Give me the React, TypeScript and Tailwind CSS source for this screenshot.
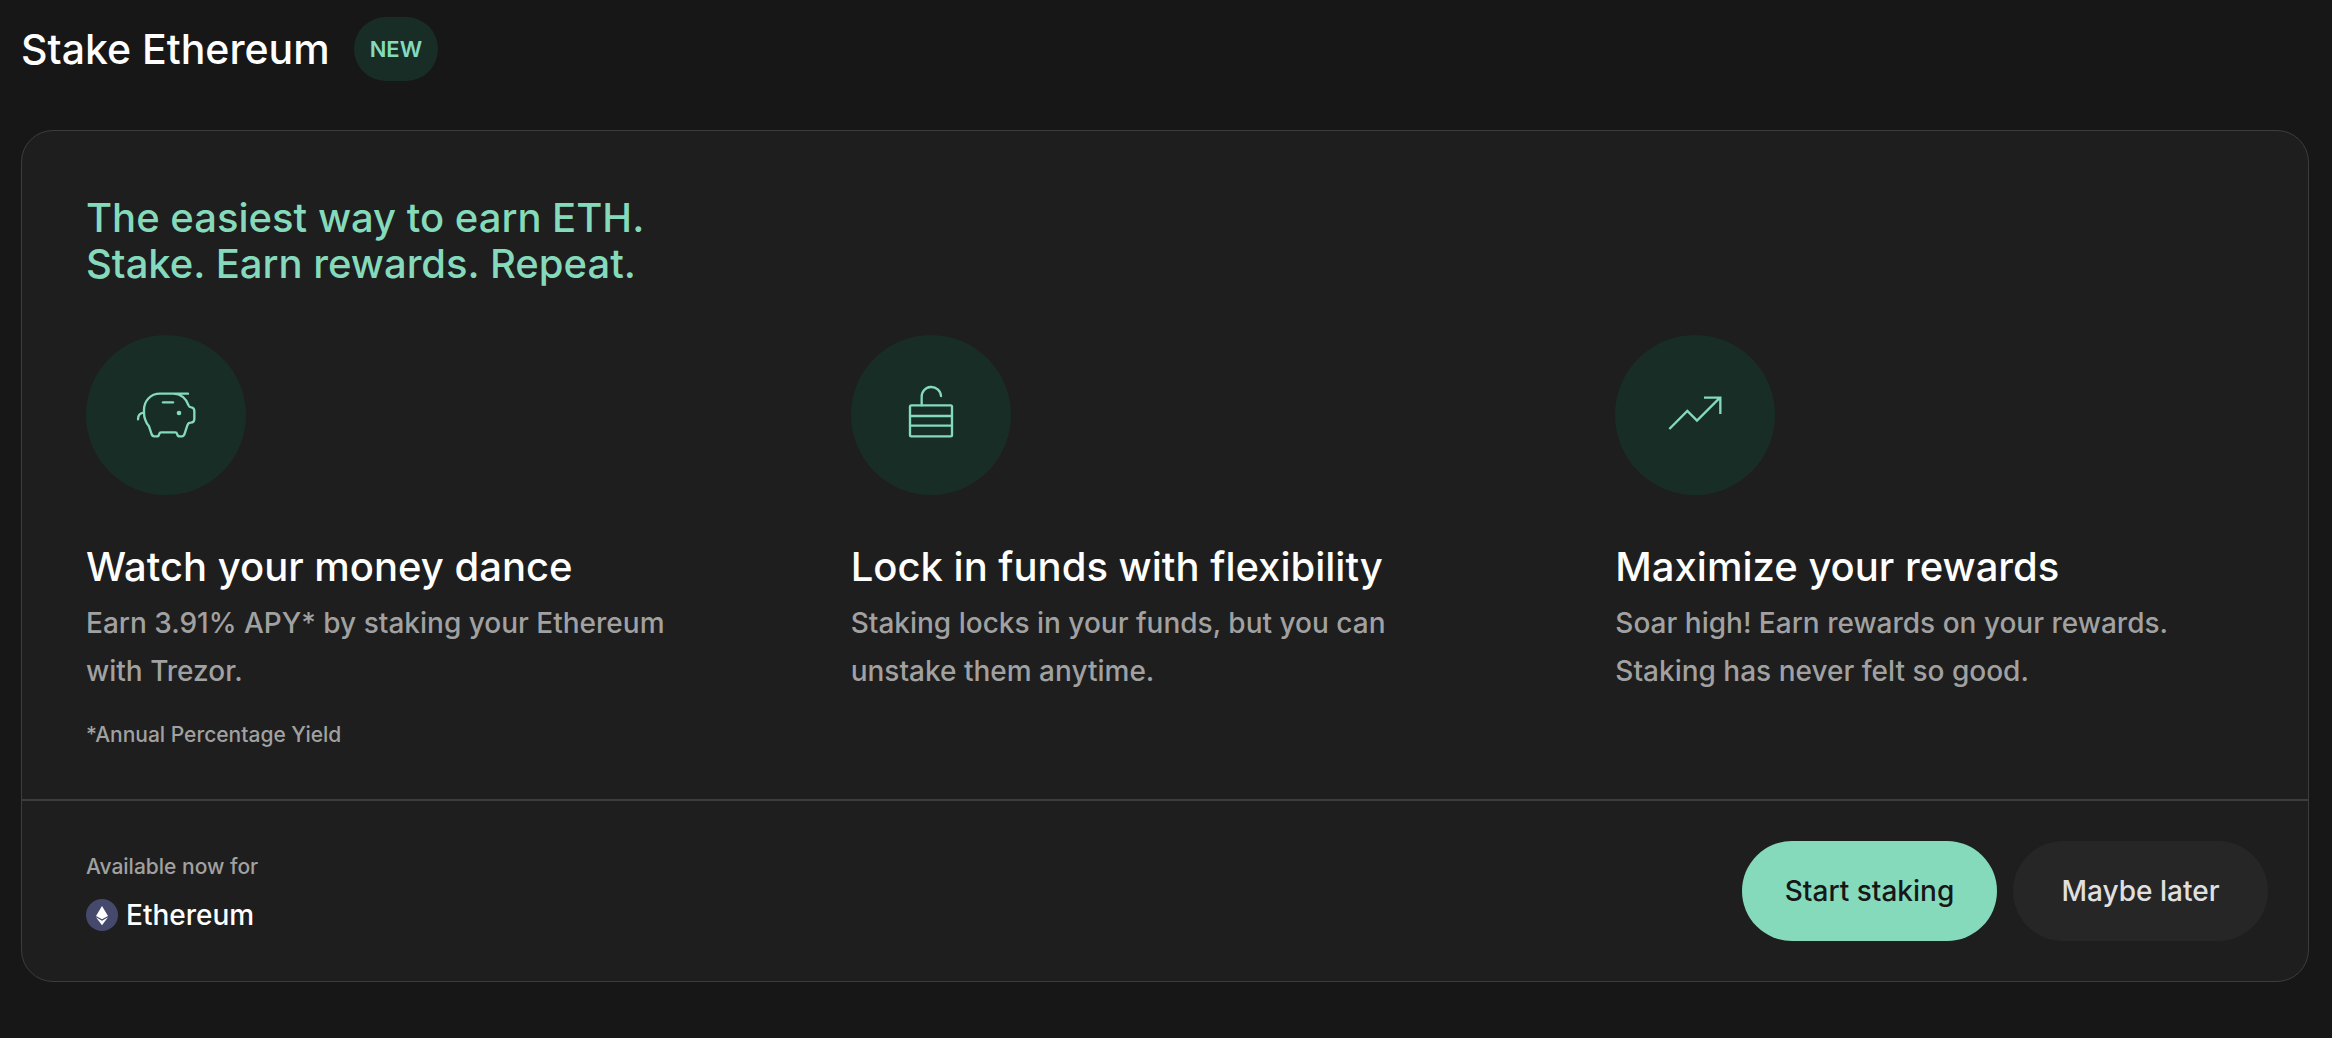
import type { ReactNode } from 'react';

function PiggyIcon() {
  return (
    <svg viewBox="18 15 480 480" className="size-full" fill="none" stroke="#84dabb" strokeWidth="7" strokeLinecap="round" strokeLinejoin="round" aria-hidden="true">
      <path d="M324 191H240C211 191 192 213 192 240V248C192 266 199 279 207 289L214 310C216 317 219 319 223 319H231C235 319 237 316 238 311Q239 307 243 307H286Q290 307 291 311C292 316 295 319 299 319H306C310 319 312 317 314 311L322 286Q325 278 332 278Q343 277 343 266V243Q343 233 334 232Q328 232 326 227C319 207 303 192 280 191" />
      <path d="M192 248Q174 249 174 268" />
      <path d="M249 217H279" />
      <circle cx="297" cy="249" r="7" fill="#84dabb" stroke="none" />
    </svg>
  );
}

function UnlockIcon() {
  return (
    <svg viewBox="18 15 480 480" className="size-full" fill="none" stroke="#84dabb" strokeWidth="7" strokeLinecap="round" strokeLinejoin="round" aria-hidden="true">
      <rect x="195" y="226" width="126" height="93" rx="4" />
      <path d="M195 258H321M195 287H321M230 226V202A29 29 0 0 1 288 198" />
    </svg>
  );
}

function GrowthIcon() {
  return (
    <svg viewBox="15 15 480 480" className="size-full" fill="none" stroke="#84dabb" strokeWidth="7" aria-hidden="true">
      <path d="M178 297L232 243L261 272L330 203M282 203H331V252" />
    </svg>
  );
}

function EthereumLogo() {
  return (
    <svg viewBox="0 0 96 96" className="size-8" aria-hidden="true">
      <circle cx="48" cy="48" r="48" fill="#454a6c" />
      <path d="M48 21L66 51L48 61L30 51Z" fill="#fff" />
      <path d="M30 55L48 65L66 55L48 79Z" fill="#fff" />
    </svg>
  );
}

function Feature({ icon, title, children }: { icon: ReactNode; title: string; children: ReactNode }) {
  return (
    <li>
      <div className="size-40 rounded-full bg-[#192d27]">{icon}</div>
      <h3 className="mt-12 text-[40px] leading-12 text-white">{title}</h3>
      <p className="mt-2 text-[28px] leading-12 text-[#a1a1a1]">{children}</p>
    </li>
  );
}

export default function App() {
  return (
    <main className="min-h-screen bg-[#171717] pt-[17px] pr-[23px] pb-14 pl-[21px] font-['Inter',sans-serif] font-medium">
      <header className="flex items-center gap-6">
        <h1 className="text-[41px] leading-12 text-white">Stake Ethereum</h1>
        <span className="flex h-16 items-center rounded-full bg-[#192d27] px-4 text-[22px] font-semibold text-[#84dabb]">NEW</span>
      </header>

      <section className="mt-[49px] rounded-4xl border border-[#3d3d3d] bg-[#1e1e1e]">
        <div className="px-16 pt-16 pb-12">
          <h2 className="text-[40px] leading-[46px] text-[#84dabb]">
            The easiest way to earn ETH.
            <br />
            Stake. Earn rewards. Repeat.
          </h2>
          <ul className="mt-12 grid grid-cols-3 gap-34">
            <Feature icon={<PiggyIcon />} title="Watch your money dance">
              Earn 3.91% APY* by staking your Ethereum with Trezor.
            </Feature>
            <Feature icon={<UnlockIcon />} title="Lock in funds with flexibility">
              Staking locks in your funds, but you can unstake them anytime.
            </Feature>
            <Feature icon={<GrowthIcon />} title="Maximize your rewards">
              Soar high! Earn rewards on your rewards. Staking has never felt so good.
            </Feature>
          </ul>
          <p className="mt-6 text-[21px] leading-8 text-[#a1a1a1]">*Annual Percentage Yield</p>
        </div>

        <footer className="flex items-center justify-between border-t-2 border-[#3d3d3d] py-10 pr-10 pl-16">
          <div>
            <p className="text-[21px] leading-12 text-[#a1a1a1]">Available now for</p>
            <div className="flex items-center gap-2 text-[28px] leading-12 text-white">
              <EthereumLogo />
              Ethereum
            </div>
          </div>
          <div className="flex gap-4 text-[28px]">
            <button type="button" className="h-25 min-w-[255px] rounded-full bg-[#84dabb] px-10 text-[#171717]">
              Start staking
            </button>
            <button type="button" className="h-25 min-w-[255px] rounded-full bg-[#262626] px-10 text-[#e0e0e0]">
              Maybe later
            </button>
          </div>
        </footer>
      </section>
    </main>
  );
}
